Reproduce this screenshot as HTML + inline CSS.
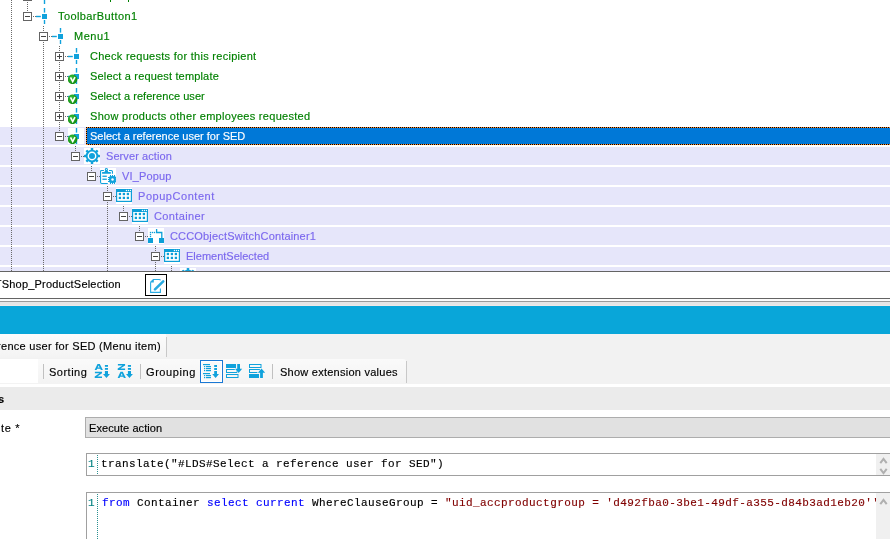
<!DOCTYPE html><html><head><meta charset="utf-8"><style>html,body{margin:0;padding:0;}body{width:890px;height:539px;position:relative;overflow:hidden;background:#fff;}#w{position:absolute;left:0;top:0;width:890px;height:539px;will-change:transform;}</style></head><body><div id="w"><div style="position:absolute;left:0;top:0;width:890px;height:271px;background:#fff;overflow:hidden"><div style="position:absolute;left:0px;top:127px;width:890px;height:18px;background:#e6e6fa;"></div><div style="position:absolute;left:0px;top:147px;width:890px;height:18px;background:#e6e6fa;"></div><div style="position:absolute;left:0px;top:167px;width:890px;height:18px;background:#e6e6fa;"></div><div style="position:absolute;left:0px;top:187px;width:890px;height:18px;background:#e6e6fa;"></div><div style="position:absolute;left:0px;top:207px;width:890px;height:18px;background:#e6e6fa;"></div><div style="position:absolute;left:0px;top:227px;width:890px;height:18px;background:#e6e6fa;"></div><div style="position:absolute;left:0px;top:247px;width:890px;height:18px;background:#e6e6fa;"></div><div style="position:absolute;left:0px;top:267px;width:890px;height:18px;background:#e6e6fa;"></div><div style="position:absolute;left:86px;top:127px;width:900px;height:18px;background:#0078d7;"></div><div style="position:absolute;left:86px;top:127px;width:900px;height:1px;background:repeating-linear-gradient(90deg,#000 0 1px,#ff8a2a 1px 2px)"></div><div style="position:absolute;left:86px;top:144px;width:900px;height:1px;background:repeating-linear-gradient(90deg,#000 0 1px,#ff8a2a 1px 2px)"></div><div style="position:absolute;left:86px;top:127px;width:1px;height:18px;background:repeating-linear-gradient(180deg,#000 0 1px,#ff8a2a 1px 2px)"></div><div style="position:absolute;left:11px;top:0px;width:1px;height:271px;background:repeating-linear-gradient(to bottom,#6a6a6a 0,#6a6a6a 1px,transparent 1px,transparent 2px)"></div><div style="position:absolute;left:27px;top:0px;width:1px;height:12px;background:repeating-linear-gradient(to bottom,#6a6a6a 0,#6a6a6a 1px,transparent 1px,transparent 2px)"></div><div style="position:absolute;left:43px;top:26px;width:1px;height:245px;background:repeating-linear-gradient(to bottom,#6a6a6a 0,#6a6a6a 1px,transparent 1px,transparent 2px)"></div><div style="position:absolute;left:59px;top:46px;width:1px;height:86px;background:repeating-linear-gradient(to bottom,#6a6a6a 0,#6a6a6a 1px,transparent 1px,transparent 2px)"></div><div style="position:absolute;left:75px;top:146px;width:1px;height:6px;background:repeating-linear-gradient(to bottom,#6a6a6a 0,#6a6a6a 1px,transparent 1px,transparent 2px)"></div><div style="position:absolute;left:91px;top:166px;width:1px;height:6px;background:repeating-linear-gradient(to bottom,#6a6a6a 0,#6a6a6a 1px,transparent 1px,transparent 2px)"></div><div style="position:absolute;left:107px;top:186px;width:1px;height:85px;background:repeating-linear-gradient(to bottom,#6a6a6a 0,#6a6a6a 1px,transparent 1px,transparent 2px)"></div><div style="position:absolute;left:123px;top:206px;width:1px;height:6px;background:repeating-linear-gradient(to bottom,#6a6a6a 0,#6a6a6a 1px,transparent 1px,transparent 2px)"></div><div style="position:absolute;left:139px;top:226px;width:1px;height:6px;background:repeating-linear-gradient(to bottom,#6a6a6a 0,#6a6a6a 1px,transparent 1px,transparent 2px)"></div><div style="position:absolute;left:155px;top:246px;width:1px;height:25px;background:repeating-linear-gradient(to bottom,#6a6a6a 0,#6a6a6a 1px,transparent 1px,transparent 2px)"></div><div style="position:absolute;left:171px;top:266px;width:1px;height:5px;background:repeating-linear-gradient(to bottom,#6a6a6a 0,#6a6a6a 1px,transparent 1px,transparent 2px)"></div><div style="position:absolute;left:23px;top:-8px;width:9px;height:9px;box-sizing:border-box;border:1px solid #646464;background:#fff"></div><svg style="position:absolute;left:36px;top:-12px;" width="16" height="16" viewBox="0 0 16 16"><g fill="#10a2dc"><rect x="6" y="6" width="5" height="5"/><rect x="7.8" y="0" width="1.4" height="4.6"/><rect x="7.8" y="12" width="1.4" height="4"/><rect x="0" y="7.8" width="4.8" height="1.4"/></g></svg><div style="position:absolute;left:110px;top:0px;width:1px;height:2px;background:#008000;"></div><div style="position:absolute;left:128px;top:0px;width:1px;height:2px;background:#008000;"></div><div style="position:absolute;left:23px;top:12px;width:9px;height:9px;box-sizing:border-box;border:1px solid #646464;background:#fff"></div><div style="position:absolute;left:25px;top:16px;width:5px;height:1px;background:#444;"></div><div style="position:absolute;left:33px;top:16px;width:1px;height:1px;background:#6a6a6a;"></div><div style="position:absolute;left:35px;top:16px;width:1px;height:1px;background:#6a6a6a;"></div><svg style="position:absolute;left:36px;top:8px;" width="16" height="16" viewBox="0 0 16 16"><g fill="#10a2dc"><rect x="6" y="6" width="5" height="5"/><rect x="7.8" y="0" width="1.4" height="4.6"/><rect x="7.8" y="12" width="1.4" height="4"/><rect x="0" y="7.8" width="4.8" height="1.4"/></g></svg><div style="position:absolute;left:58px;top:9px;white-space:pre;font-family:'Liberation Sans', sans-serif;font-size:11px;line-height:14px;color:#008000;letter-spacing:0.385px;font-weight:normal;-webkit-text-stroke:0.15px #008000;">ToolbarButton1</div><div style="position:absolute;left:39px;top:32px;width:9px;height:9px;box-sizing:border-box;border:1px solid #646464;background:#fff"></div><div style="position:absolute;left:41px;top:36px;width:5px;height:1px;background:#444;"></div><div style="position:absolute;left:49px;top:36px;width:1px;height:1px;background:#6a6a6a;"></div><div style="position:absolute;left:51px;top:36px;width:1px;height:1px;background:#6a6a6a;"></div><svg style="position:absolute;left:52px;top:28px;" width="16" height="16" viewBox="0 0 16 16"><g fill="#10a2dc"><rect x="6" y="6" width="5" height="5"/><rect x="7.8" y="0" width="1.4" height="4.6"/><rect x="7.8" y="12" width="1.4" height="4"/><rect x="0" y="7.8" width="4.8" height="1.4"/></g></svg><div style="position:absolute;left:74px;top:29px;white-space:pre;font-family:'Liberation Sans', sans-serif;font-size:11px;line-height:14px;color:#008000;letter-spacing:0.500px;font-weight:normal;-webkit-text-stroke:0.15px #008000;">Menu1</div><div style="position:absolute;left:55px;top:52px;width:9px;height:9px;box-sizing:border-box;border:1px solid #646464;background:#fff"></div><div style="position:absolute;left:57px;top:56px;width:5px;height:1px;background:#444;"></div><div style="position:absolute;left:59px;top:54px;width:1px;height:5px;background:#444;"></div><div style="position:absolute;left:65px;top:56px;width:1px;height:1px;background:#6a6a6a;"></div><div style="position:absolute;left:67px;top:56px;width:1px;height:1px;background:#6a6a6a;"></div><svg style="position:absolute;left:68px;top:48px;" width="16" height="16" viewBox="0 0 16 16"><g fill="#10a2dc"><rect x="6" y="6" width="5" height="5"/><rect x="7.8" y="0" width="1.4" height="4.6"/><rect x="7.8" y="12" width="1.4" height="4"/><rect x="0" y="7.8" width="4.8" height="1.4"/></g></svg><div style="position:absolute;left:90px;top:49px;white-space:pre;font-family:'Liberation Sans', sans-serif;font-size:11px;line-height:14px;color:#008000;letter-spacing:0.281px;font-weight:normal;-webkit-text-stroke:0.15px #008000;">Check requests for this recipient</div><div style="position:absolute;left:55px;top:72px;width:9px;height:9px;box-sizing:border-box;border:1px solid #646464;background:#fff"></div><div style="position:absolute;left:57px;top:76px;width:5px;height:1px;background:#444;"></div><div style="position:absolute;left:59px;top:74px;width:1px;height:5px;background:#444;"></div><div style="position:absolute;left:65px;top:76px;width:1px;height:1px;background:#6a6a6a;"></div><div style="position:absolute;left:67px;top:76px;width:1px;height:1px;background:#6a6a6a;"></div><svg style="position:absolute;left:68px;top:68px;" width="16" height="16" viewBox="0 0 16 16"><g fill="#10a2dc"><rect x="6" y="6" width="5" height="5"/><rect x="7.8" y="0" width="1.4" height="4.6"/><rect x="7.8" y="12" width="1.4" height="4"/><rect x="0" y="7.8" width="4.8" height="1.4"/></g><defs><radialGradient id="gc3" cx="0.4" cy="0.35" r="0.7"><stop offset="0" stop-color="#3cc23c"/><stop offset="1" stop-color="#0b870b"/></radialGradient></defs><circle cx="4.6" cy="11.3" r="4.8" fill="url(#gc3)"/><path d="M2.5 9.3 L4.7 13.6 L7.0 9.2" fill="none" stroke="#fff" stroke-width="1.6" stroke-linejoin="miter"/></svg><div style="position:absolute;left:90px;top:69px;white-space:pre;font-family:'Liberation Sans', sans-serif;font-size:11px;line-height:14px;color:#008000;letter-spacing:0.167px;font-weight:normal;-webkit-text-stroke:0.15px #008000;">Select a request template</div><div style="position:absolute;left:55px;top:92px;width:9px;height:9px;box-sizing:border-box;border:1px solid #646464;background:#fff"></div><div style="position:absolute;left:57px;top:96px;width:5px;height:1px;background:#444;"></div><div style="position:absolute;left:59px;top:94px;width:1px;height:5px;background:#444;"></div><div style="position:absolute;left:65px;top:96px;width:1px;height:1px;background:#6a6a6a;"></div><div style="position:absolute;left:67px;top:96px;width:1px;height:1px;background:#6a6a6a;"></div><svg style="position:absolute;left:68px;top:88px;" width="16" height="16" viewBox="0 0 16 16"><g fill="#10a2dc"><rect x="6" y="6" width="5" height="5"/><rect x="7.8" y="0" width="1.4" height="4.6"/><rect x="7.8" y="12" width="1.4" height="4"/><rect x="0" y="7.8" width="4.8" height="1.4"/></g><defs><radialGradient id="gc4" cx="0.4" cy="0.35" r="0.7"><stop offset="0" stop-color="#3cc23c"/><stop offset="1" stop-color="#0b870b"/></radialGradient></defs><circle cx="4.6" cy="11.3" r="4.8" fill="url(#gc4)"/><path d="M2.5 9.3 L4.7 13.6 L7.0 9.2" fill="none" stroke="#fff" stroke-width="1.6" stroke-linejoin="miter"/></svg><div style="position:absolute;left:90px;top:89px;white-space:pre;font-family:'Liberation Sans', sans-serif;font-size:11px;line-height:14px;color:#008000;letter-spacing:0.045px;font-weight:normal;-webkit-text-stroke:0.15px #008000;">Select a reference user</div><div style="position:absolute;left:55px;top:112px;width:9px;height:9px;box-sizing:border-box;border:1px solid #646464;background:#fff"></div><div style="position:absolute;left:57px;top:116px;width:5px;height:1px;background:#444;"></div><div style="position:absolute;left:59px;top:114px;width:1px;height:5px;background:#444;"></div><div style="position:absolute;left:65px;top:116px;width:1px;height:1px;background:#6a6a6a;"></div><div style="position:absolute;left:67px;top:116px;width:1px;height:1px;background:#6a6a6a;"></div><svg style="position:absolute;left:68px;top:108px;" width="16" height="16" viewBox="0 0 16 16"><g fill="#10a2dc"><rect x="6" y="6" width="5" height="5"/><rect x="7.8" y="0" width="1.4" height="4.6"/><rect x="7.8" y="12" width="1.4" height="4"/><rect x="0" y="7.8" width="4.8" height="1.4"/></g><defs><radialGradient id="gc5" cx="0.4" cy="0.35" r="0.7"><stop offset="0" stop-color="#3cc23c"/><stop offset="1" stop-color="#0b870b"/></radialGradient></defs><circle cx="4.6" cy="11.3" r="4.8" fill="url(#gc5)"/><path d="M2.5 9.3 L4.7 13.6 L7.0 9.2" fill="none" stroke="#fff" stroke-width="1.6" stroke-linejoin="miter"/></svg><div style="position:absolute;left:90px;top:109px;white-space:pre;font-family:'Liberation Sans', sans-serif;font-size:11px;line-height:14px;color:#008000;letter-spacing:0.289px;font-weight:normal;-webkit-text-stroke:0.15px #008000;">Show products other employees requested</div><div style="position:absolute;left:55px;top:132px;width:9px;height:9px;box-sizing:border-box;border:1px solid #646464;background:#fff"></div><div style="position:absolute;left:57px;top:136px;width:5px;height:1px;background:#444;"></div><div style="position:absolute;left:65px;top:136px;width:1px;height:1px;background:#6a6a6a;"></div><div style="position:absolute;left:67px;top:136px;width:1px;height:1px;background:#6a6a6a;"></div><div style="position:absolute;left:68px;top:128px;width:16px;height:16px;background:#fff;"></div><svg style="position:absolute;left:68px;top:128px;" width="16" height="16" viewBox="0 0 16 16"><g fill="#10a2dc"><rect x="6" y="6" width="5" height="5"/><rect x="7.8" y="0" width="1.4" height="4.6"/><rect x="7.8" y="12" width="1.4" height="4"/><rect x="0" y="7.8" width="4.8" height="1.4"/></g><defs><radialGradient id="gc6" cx="0.4" cy="0.35" r="0.7"><stop offset="0" stop-color="#3cc23c"/><stop offset="1" stop-color="#0b870b"/></radialGradient></defs><circle cx="4.6" cy="11.3" r="4.8" fill="url(#gc6)"/><path d="M2.5 9.3 L4.7 13.6 L7.0 9.2" fill="none" stroke="#fff" stroke-width="1.6" stroke-linejoin="miter"/></svg><div style="position:absolute;left:90px;top:129px;white-space:pre;font-family:'Liberation Sans', sans-serif;font-size:11px;line-height:14px;color:#fff;letter-spacing:0.000px;font-weight:normal;-webkit-text-stroke:0.15px #fff;">Select a reference user for SED</div><div style="position:absolute;left:71px;top:152px;width:9px;height:9px;box-sizing:border-box;border:1px solid #646464;background:#fff"></div><div style="position:absolute;left:73px;top:156px;width:5px;height:1px;background:#444;"></div><div style="position:absolute;left:81px;top:156px;width:1px;height:1px;background:#6a6a6a;"></div><div style="position:absolute;left:83px;top:156px;width:1px;height:1px;background:#6a6a6a;"></div><div style="position:absolute;left:84px;top:148px;width:16px;height:16px;background:#fff;"></div><svg style="position:absolute;left:84px;top:148px;" width="16" height="16" viewBox="0 0 16 16"><g fill="#10a2dc"><circle cx="8" cy="8" r="6.3"/><rect x="6.75" y="0" width="2.5" height="8" rx="0.6" transform="rotate(0.0 8 8)"/><rect x="6.75" y="0" width="2.5" height="8" rx="0.6" transform="rotate(45.0 8 8)"/><rect x="6.75" y="0" width="2.5" height="8" rx="0.6" transform="rotate(90.0 8 8)"/><rect x="6.75" y="0" width="2.5" height="8" rx="0.6" transform="rotate(135.0 8 8)"/><rect x="6.75" y="0" width="2.5" height="8" rx="0.6" transform="rotate(180.0 8 8)"/><rect x="6.75" y="0" width="2.5" height="8" rx="0.6" transform="rotate(225.0 8 8)"/><rect x="6.75" y="0" width="2.5" height="8" rx="0.6" transform="rotate(270.0 8 8)"/><rect x="6.75" y="0" width="2.5" height="8" rx="0.6" transform="rotate(315.0 8 8)"/></g><circle cx="8" cy="8" r="4.4" fill="#fff"/><circle cx="8" cy="8" r="3" fill="#10a2dc"/></svg><div style="position:absolute;left:106px;top:149px;white-space:pre;font-family:'Liberation Sans', sans-serif;font-size:11px;line-height:14px;color:#7b68ee;letter-spacing:0.083px;font-weight:normal;-webkit-text-stroke:0.15px #7b68ee;">Server action</div><div style="position:absolute;left:87px;top:172px;width:9px;height:9px;box-sizing:border-box;border:1px solid #646464;background:#fff"></div><div style="position:absolute;left:89px;top:176px;width:5px;height:1px;background:#444;"></div><div style="position:absolute;left:97px;top:176px;width:1px;height:1px;background:#6a6a6a;"></div><div style="position:absolute;left:99px;top:176px;width:1px;height:1px;background:#6a6a6a;"></div><div style="position:absolute;left:100px;top:168px;width:16px;height:16px;background:#fff;"></div><svg style="position:absolute;left:100px;top:168px;" width="16" height="16" viewBox="0 0 16 16"><g fill="none" stroke="#10a2dc" stroke-width="1.1"><path d="M3.9 2.45 H1.7 Q0.55 2.45 0.55 3.6 V14.3 Q0.55 15.45 1.7 15.45 H7.8"/><path d="M9 2.45 H11.3 Q12.45 2.45 12.45 3.6 V5.8"/></g><g fill="#10a2dc"><circle cx="6.4" cy="1.45" r="1.5"/><path d="M5.2 2.2 H7.6 L8.3 4 H10.8 V5.8 H2.1 V4 H4.5 Z"/><rect x="2.4" y="7.6" width="4.4" height="1.3"/><rect x="2.4" y="10.6" width="4.4" height="1.3"/><rect x="9.2" y="8.2" width="6.6" height="6.6" rx="1.2"/><circle cx="12.5" cy="11.5" r="3.2"/><rect x="9.975" y="7.0" width="1.05" height="2.5" transform="rotate(0 12.5 11.5)"/><rect x="11.975" y="7.0" width="1.05" height="2.5" transform="rotate(0 12.5 11.5)"/><rect x="13.975" y="7.0" width="1.05" height="2.5" transform="rotate(0 12.5 11.5)"/><rect x="9.975" y="7.0" width="1.05" height="2.5" transform="rotate(90 12.5 11.5)"/><rect x="11.975" y="7.0" width="1.05" height="2.5" transform="rotate(90 12.5 11.5)"/><rect x="13.975" y="7.0" width="1.05" height="2.5" transform="rotate(90 12.5 11.5)"/><rect x="9.975" y="7.0" width="1.05" height="2.5" transform="rotate(180 12.5 11.5)"/><rect x="11.975" y="7.0" width="1.05" height="2.5" transform="rotate(180 12.5 11.5)"/><rect x="13.975" y="7.0" width="1.05" height="2.5" transform="rotate(180 12.5 11.5)"/><rect x="9.975" y="7.0" width="1.05" height="2.5" transform="rotate(270 12.5 11.5)"/><rect x="11.975" y="7.0" width="1.05" height="2.5" transform="rotate(270 12.5 11.5)"/><rect x="13.975" y="7.0" width="1.05" height="2.5" transform="rotate(270 12.5 11.5)"/></g><circle cx="6.4" cy="1.35" r="0.55" fill="#fff"/><circle cx="12.5" cy="11.5" r="1.25" fill="#fff"/></svg><div style="position:absolute;left:122px;top:169px;white-space:pre;font-family:'Liberation Sans', sans-serif;font-size:11px;line-height:14px;color:#7b68ee;letter-spacing:0.143px;font-weight:normal;-webkit-text-stroke:0.15px #7b68ee;">VI_Popup</div><div style="position:absolute;left:103px;top:192px;width:9px;height:9px;box-sizing:border-box;border:1px solid #646464;background:#fff"></div><div style="position:absolute;left:105px;top:196px;width:5px;height:1px;background:#444;"></div><div style="position:absolute;left:113px;top:196px;width:1px;height:1px;background:#6a6a6a;"></div><div style="position:absolute;left:115px;top:196px;width:1px;height:1px;background:#6a6a6a;"></div><div style="position:absolute;left:116px;top:188px;width:16px;height:16px;background:#fff;"></div><svg style="position:absolute;left:116px;top:188px;" width="16" height="16" viewBox="0 0 16 16"><rect x="0.6" y="1.6" width="14.8" height="11.8" fill="#fff" stroke="#0c9fd8" stroke-width="1.2"/><rect x="0" y="1" width="16" height="3" fill="#0c9fd8"/><g fill="#fff"><circle cx="10.4" cy="2.5" r="0.65"/><circle cx="12.4" cy="2.5" r="0.65"/><circle cx="14.4" cy="2.5" r="0.65"/></g><g fill="#0c9fd8"><rect x="2.75" y="4.85" width="2.3" height="2.3"/><rect x="2.75" y="8.75" width="2.3" height="2.3"/><rect x="6.75" y="4.85" width="2.3" height="2.3"/><rect x="6.75" y="8.75" width="2.3" height="2.3"/><rect x="10.75" y="4.85" width="2.3" height="2.3"/><rect x="10.75" y="8.75" width="2.3" height="2.3"/></g></svg><div style="position:absolute;left:138px;top:189px;white-space:pre;font-family:'Liberation Sans', sans-serif;font-size:11px;line-height:14px;color:#7b68ee;letter-spacing:0.545px;font-weight:normal;-webkit-text-stroke:0.15px #7b68ee;">PopupContent</div><div style="position:absolute;left:119px;top:212px;width:9px;height:9px;box-sizing:border-box;border:1px solid #646464;background:#fff"></div><div style="position:absolute;left:121px;top:216px;width:5px;height:1px;background:#444;"></div><div style="position:absolute;left:129px;top:216px;width:1px;height:1px;background:#6a6a6a;"></div><div style="position:absolute;left:131px;top:216px;width:1px;height:1px;background:#6a6a6a;"></div><div style="position:absolute;left:132px;top:208px;width:16px;height:16px;background:#fff;"></div><svg style="position:absolute;left:132px;top:208px;" width="16" height="16" viewBox="0 0 16 16"><rect x="0.6" y="1.6" width="14.8" height="11.8" fill="#fff" stroke="#0c9fd8" stroke-width="1.2"/><rect x="0" y="1" width="16" height="3" fill="#0c9fd8"/><g fill="#fff"><circle cx="10.4" cy="2.5" r="0.65"/><circle cx="12.4" cy="2.5" r="0.65"/><circle cx="14.4" cy="2.5" r="0.65"/></g><g fill="#0c9fd8"><rect x="2.75" y="4.85" width="2.3" height="2.3"/><rect x="2.75" y="8.75" width="2.3" height="2.3"/><rect x="6.75" y="4.85" width="2.3" height="2.3"/><rect x="6.75" y="8.75" width="2.3" height="2.3"/><rect x="10.75" y="4.85" width="2.3" height="2.3"/><rect x="10.75" y="8.75" width="2.3" height="2.3"/></g></svg><div style="position:absolute;left:154px;top:209px;white-space:pre;font-family:'Liberation Sans', sans-serif;font-size:11px;line-height:14px;color:#7b68ee;letter-spacing:0.375px;font-weight:normal;-webkit-text-stroke:0.15px #7b68ee;">Container</div><div style="position:absolute;left:135px;top:232px;width:9px;height:9px;box-sizing:border-box;border:1px solid #646464;background:#fff"></div><div style="position:absolute;left:137px;top:236px;width:5px;height:1px;background:#444;"></div><div style="position:absolute;left:145px;top:236px;width:1px;height:1px;background:#6a6a6a;"></div><div style="position:absolute;left:147px;top:236px;width:1px;height:1px;background:#6a6a6a;"></div><div style="position:absolute;left:148px;top:228px;width:16px;height:16px;background:#fff;"></div><svg style="position:absolute;left:148px;top:228px;" width="16" height="16" viewBox="0 0 16 16"><g fill="#0c9fd8"><rect x="0" y="10" width="5" height="5"/><rect x="11" y="10" width="5" height="5"/><rect x="1.85" y="3.85" width="1.3" height="1.3"/><rect x="3.85" y="3.85" width="1.3" height="1.3"/><rect x="5.85" y="3.85" width="1.3" height="1.3"/><rect x="1.85" y="5.85" width="1.3" height="1.3"/><rect x="1.85" y="7.85" width="1.3" height="1.3"/></g><path d="M8.6 1 V4.5 H13.8 V10.2" fill="none" stroke="#0c9fd8" stroke-width="1.3"/></svg><div style="position:absolute;left:170px;top:229px;white-space:pre;font-family:'Liberation Sans', sans-serif;font-size:11px;line-height:14px;color:#7b68ee;letter-spacing:0.167px;font-weight:normal;-webkit-text-stroke:0.15px #7b68ee;">CCCObjectSwitchContainer1</div><div style="position:absolute;left:151px;top:252px;width:9px;height:9px;box-sizing:border-box;border:1px solid #646464;background:#fff"></div><div style="position:absolute;left:153px;top:256px;width:5px;height:1px;background:#444;"></div><div style="position:absolute;left:161px;top:256px;width:1px;height:1px;background:#6a6a6a;"></div><div style="position:absolute;left:163px;top:256px;width:1px;height:1px;background:#6a6a6a;"></div><div style="position:absolute;left:164px;top:248px;width:16px;height:16px;background:#fff;"></div><svg style="position:absolute;left:164px;top:248px;" width="16" height="16" viewBox="0 0 16 16"><rect x="0.6" y="1.6" width="14.8" height="11.8" fill="#fff" stroke="#0c9fd8" stroke-width="1.2"/><rect x="0" y="1" width="16" height="3" fill="#0c9fd8"/><g fill="#fff"><circle cx="10.4" cy="2.5" r="0.65"/><circle cx="12.4" cy="2.5" r="0.65"/><circle cx="14.4" cy="2.5" r="0.65"/></g><g fill="#0c9fd8"><rect x="2.75" y="4.85" width="2.3" height="2.3"/><rect x="2.75" y="8.75" width="2.3" height="2.3"/><rect x="6.75" y="4.85" width="2.3" height="2.3"/><rect x="6.75" y="8.75" width="2.3" height="2.3"/><rect x="10.75" y="4.85" width="2.3" height="2.3"/><rect x="10.75" y="8.75" width="2.3" height="2.3"/></g></svg><div style="position:absolute;left:186px;top:249px;white-space:pre;font-family:'Liberation Sans', sans-serif;font-size:11px;line-height:14px;color:#7b68ee;letter-spacing:0.000px;font-weight:normal;-webkit-text-stroke:0.15px #7b68ee;">ElementSelected</div><div style="position:absolute;left:180px;top:268px;width:16px;height:16px;background:#fff;"></div><svg style="position:absolute;left:180px;top:268px;" width="16" height="16" viewBox="0 0 16 16"><g fill="#10a2dc"><circle cx="8" cy="8" r="6.3"/><rect x="6.75" y="0" width="2.5" height="8" rx="0.6" transform="rotate(0.0 8 8)"/><rect x="6.75" y="0" width="2.5" height="8" rx="0.6" transform="rotate(45.0 8 8)"/><rect x="6.75" y="0" width="2.5" height="8" rx="0.6" transform="rotate(90.0 8 8)"/><rect x="6.75" y="0" width="2.5" height="8" rx="0.6" transform="rotate(135.0 8 8)"/><rect x="6.75" y="0" width="2.5" height="8" rx="0.6" transform="rotate(180.0 8 8)"/><rect x="6.75" y="0" width="2.5" height="8" rx="0.6" transform="rotate(225.0 8 8)"/><rect x="6.75" y="0" width="2.5" height="8" rx="0.6" transform="rotate(270.0 8 8)"/><rect x="6.75" y="0" width="2.5" height="8" rx="0.6" transform="rotate(315.0 8 8)"/></g><circle cx="8" cy="8" r="4.4" fill="#fff"/><circle cx="8" cy="8" r="3" fill="#10a2dc"/></svg></div><div style="position:absolute;left:0px;top:271px;width:890px;height:1px;background:#646464;"></div><div style="position:absolute;left:0px;top:272px;width:890px;height:26px;background:#fff;"></div><div style="position:absolute;left:-5.2px;top:277px;white-space:pre;font-family:'Liberation Sans', sans-serif;font-size:11px;line-height:14px;color:#000;letter-spacing:0.200px;font-weight:normal;-webkit-text-stroke:0.15px #000;">TShop_ProductSelection</div><div style="position:absolute;left:145px;top:274px;width:22px;height:22px;box-sizing:border-box;border:1px solid #000;background:#fff"></div><svg style="position:absolute;left:145px;top:274px;" width="22" height="22" viewBox="0 0 22 22"><path d="M5.6 8.2 V18.4 H15.4 V14.4" fill="none" stroke="#29abe2" stroke-width="1.1"/><path d="M5.6 8.2 L8.4 5.5 H14.2 Q15.2 5.5 15.6 6.3" fill="none" stroke="#29abe2" stroke-width="1.1"/><path d="M5.2 8.6 L8.8 5.1 V8.6 Z" fill="#29abe2"/><path d="M10 15.4 L18.2 7.4" stroke="#29abe2" stroke-width="2.6" stroke-linecap="round"/></svg><div style="position:absolute;left:0px;top:298px;width:890px;height:1px;background:#646464;"></div><div style="position:absolute;left:0px;top:299px;width:890px;height:2px;background:#fbfbfb;"></div><div style="position:absolute;left:0px;top:301px;width:890px;height:1px;background:#9a9a9a;"></div><div style="position:absolute;left:0px;top:302px;width:890px;height:3px;background:#e6e6e6;"></div><div style="position:absolute;left:0px;top:305px;width:890px;height:1px;background:#efe9e7;"></div><div style="position:absolute;left:0px;top:306px;width:890px;height:28px;background:#09a6d9;"></div><div style="position:absolute;left:0px;top:334px;width:890px;height:50px;background:#f2f2f2;"></div><div style="position:absolute;left:0;top:334px;width:166px;height:24px;background:linear-gradient(#fcfcfc,#f3f3f3)"></div><div style="position:absolute;left:166px;top:337px;width:1px;height:20px;background:#c8c8c8;"></div><div style="position:absolute;left:-2.9557142857142855px;top:339px;white-space:pre;font-family:'Liberation Sans', sans-serif;font-size:11px;line-height:14px;color:#000;letter-spacing:0.286px;font-weight:normal;-webkit-text-stroke:0.15px #000;">rence user for SED (Menu item)</div><div style="position:absolute;left:0;top:359px;width:406px;height:25px;background:linear-gradient(#fafafa,#f3f3f3);border-top-right-radius:3px"></div><div style="position:absolute;left:406px;top:361px;width:1px;height:22px;background:#c8c8c8;"></div><div style="position:absolute;left:0px;top:359px;width:38px;height:24px;background:#fff;"></div><div style="position:absolute;left:43px;top:364px;width:1px;height:15px;background:#c0c0c0;"></div><div style="position:absolute;left:49px;top:365px;white-space:pre;font-family:'Liberation Sans', sans-serif;font-size:11px;line-height:14px;color:#000;letter-spacing:0.500px;font-weight:normal;-webkit-text-stroke:0.15px #000;">Sorting</div><svg style="position:absolute;left:94px;top:363px;" width="16" height="16" viewBox="0 0 16 16"><g fill="#10a2dc"><path fill-rule="evenodd" d="M0.6 7.0 L3.5 0.9 H5.800000000000001 L8.9 7.0 H6.800000000000001 L6.300000000000001 5.800000000000001 H3.1 L2.6 7.0 Z M3.7 4.5 H5.6000000000000005 L4.75 2.4 Z"/><path d="M0.9 8.8 H8.0 V10.3 L3.3 13.5 H8.0 V15.0 H0.7 V13.5 L5.4 10.3 H0.9 Z"/><rect x="10.9" y="2" width="3.1" height="1.8"/><rect x="10.9" y="5" width="3.1" height="1.8"/><path d="M10.9 8 H14 V11 H15.9 L12.45 15 L9 11 H10.9 Z"/></g></svg><svg style="position:absolute;left:117px;top:363px;" width="16" height="16" viewBox="0 0 16 16"><g fill="#10a2dc"><path d="M0.9 0.9 H8.1 V2.4 L3.3 5.6000000000000005 H8.1 V7.1000000000000005 H0.7 V5.6000000000000005 L5.5 2.4 H0.9 Z"/><path fill-rule="evenodd" d="M0.6 14.9 L3.5 8.8 H5.800000000000001 L8.9 14.9 H6.800000000000001 L6.300000000000001 13.700000000000001 H3.1 L2.6 14.9 Z M3.7 12.4 H5.6000000000000005 L4.75 10.3 Z"/><rect x="10.9" y="2" width="3.1" height="1.8"/><rect x="10.9" y="5" width="3.1" height="1.8"/><path d="M10.9 8 H14 V11 H15.9 L12.45 15 L9 11 H10.9 Z"/></g></svg><div style="position:absolute;left:140px;top:364px;width:1px;height:15px;background:#c0c0c0;"></div><div style="position:absolute;left:146px;top:365px;white-space:pre;font-family:'Liberation Sans', sans-serif;font-size:11px;line-height:14px;color:#000;letter-spacing:0.571px;font-weight:normal;-webkit-text-stroke:0.15px #000;">Grouping</div><svg style="position:absolute;left:200px;top:360px;" width="23" height="23" viewBox="0 0 23 23"><rect x="0.5" y="0.5" width="22" height="22" fill="#f9f9f9" stroke="#1a78d4" stroke-width="1"/><rect x="1.5" y="1.5" width="20" height="20" fill="none" stroke="#ffffff" stroke-width="1"/><g fill="#10a2dc"><rect x="3" y="4" width="7" height="1.2"/><rect x="4" y="6" width="1.2" height="1.2"/><rect x="6" y="6" width="5" height="1.2"/><rect x="4" y="8" width="1.2" height="1.2"/><rect x="6" y="8" width="5" height="1.2"/><rect x="4" y="10" width="1.2" height="1.2"/><rect x="6" y="10" width="5" height="1.2"/><rect x="4" y="15" width="1.2" height="1.2"/><rect x="6" y="15" width="5" height="1.2"/><rect x="4" y="17" width="1.2" height="1.2"/><rect x="6" y="17" width="5" height="1.2"/><rect x="3" y="13" width="7" height="1.2"/><rect x="14.2" y="5" width="2.8" height="2"/><rect x="14.2" y="8" width="2.8" height="2"/><path d="M14.2 11 H17 V14 H19 L15.6 18 L12.2 14 H14.2 Z"/></g></svg><svg style="position:absolute;left:226px;top:364px;" width="17" height="15" viewBox="0 0 17 15"><g fill="#10a2dc"><rect x="0" y="0" width="10" height="4"/></g><g fill="none" stroke="#10a2dc" stroke-width="1"><rect x="0.5" y="5.5" width="10.5" height="3"/><rect x="0.5" y="10.5" width="11.5" height="3"/></g><path d="M11.2 0 H14 V4.8 H16.2 L12.6 9 L9 4.8 H11.2 Z" fill="#10a2dc" stroke="#f7f7f7" stroke-width="1.1" paint-order="stroke"/></svg><svg style="position:absolute;left:249px;top:364px;" width="17" height="15" viewBox="0 0 17 15"><g fill="none" stroke="#10a2dc" stroke-width="1"><rect x="0.5" y="0.5" width="11.5" height="3"/><rect x="0.5" y="5.5" width="10.5" height="3"/></g><g fill="#10a2dc"><rect x="0" y="10" width="10" height="4"/></g><path d="M11.1 14 H13.9 V8.7 H16.2 L12.5 4.6 L8.9 8.7 H11.1 Z" fill="#10a2dc" stroke="#f7f7f7" stroke-width="1.1" paint-order="stroke"/></svg><div style="position:absolute;left:272px;top:364px;width:1px;height:15px;background:#c0c0c0;"></div><div style="position:absolute;left:280px;top:365px;white-space:pre;font-family:'Liberation Sans', sans-serif;font-size:11px;line-height:14px;color:#000;letter-spacing:0.250px;font-weight:normal;-webkit-text-stroke:0.15px #000;">Show extension values</div><div style="position:absolute;left:0px;top:384px;width:890px;height:3px;background:#fff;"></div><div style="position:absolute;left:0px;top:387px;width:890px;height:23px;background:#ebebeb;"></div><div style="position:absolute;left:-2px;top:392px;white-space:pre;font-family:'Liberation Sans', sans-serif;font-size:11px;line-height:14px;color:#000;letter-spacing:0.000px;font-weight:bold;-webkit-text-stroke:0.15px #000;">s</div><div style="position:absolute;left:0px;top:410px;width:890px;height:129px;background:#fff;"></div><div style="position:absolute;left:1px;top:421px;white-space:pre;font-family:'Liberation Sans', sans-serif;font-size:11px;line-height:14px;color:#000;letter-spacing:0.667px;font-weight:normal;-webkit-text-stroke:0.15px #000;">te *</div><div style="position:absolute;left:85px;top:417px;width:810px;height:21px;box-sizing:border-box;border:1px solid #adadad;background:#e1e1e1"></div><div style="position:absolute;left:89px;top:421px;white-space:pre;font-family:'Liberation Sans', sans-serif;font-size:11px;line-height:14px;color:#000;letter-spacing:0.077px;font-weight:normal;-webkit-text-stroke:0.15px #000;">Execute action</div><div style="position:absolute;left:86px;top:453px;width:810px;height:23px;box-sizing:border-box;border:1px solid #a0a0a0;background:#fff"></div><div style="position:absolute;left:876px;top:454px;width:14px;height:21px;background:#f0f0f0;"></div><div style="position:absolute;left:97px;top:455px;width:1px;height:20px;background:repeating-linear-gradient(to bottom,#2a9090 0,#2a9090 1px,transparent 1px,transparent 2px)"></div><div style="position:absolute;left:88px;top:457px;white-space:pre;font-family:'Liberation Mono', monospace;font-size:11px;line-height:14px;color:#008080;letter-spacing:0.400px;font-weight:normal;-webkit-text-stroke:0.15px #008080;">1</div><div style="position:absolute;left:101px;top:457px;white-space:pre;font-family:'Liberation Mono', monospace;font-size:11px;line-height:14px;color:#000;letter-spacing:0.400px;font-weight:normal;-webkit-text-stroke:0.15px #000;">translate("#LDS#Select a reference user for SED")</div><svg style="position:absolute;left:879px;top:457px;" width="9" height="7" viewBox="0 0 9 7"><path d="M1.3 6.2 L4.5 2 L7.7 6.2" fill="none" stroke="#b0b0b0" stroke-width="2"/></svg><svg style="position:absolute;left:879px;top:468px;" width="9" height="7" viewBox="0 0 9 7"><path d="M1.3 0.8 L4.5 5 L7.7 0.8" fill="none" stroke="#b0b0b0" stroke-width="2"/></svg><div style="position:absolute;left:86px;top:492px;width:810px;height:60px;box-sizing:border-box;border:1px solid #a0a0a0;background:#fff"></div><div style="position:absolute;left:97px;top:494px;width:1px;height:45px;background:repeating-linear-gradient(to bottom,#2a9090 0,#2a9090 1px,transparent 1px,transparent 2px)"></div><div style="position:absolute;left:88px;top:496px;white-space:pre;font-family:'Liberation Mono', monospace;font-size:11px;line-height:14px;color:#008080;letter-spacing:0.400px;font-weight:normal;-webkit-text-stroke:0.15px #008080;">1</div><div style="position:absolute;left:102px;top:496px;width:774px;overflow:hidden;white-space:pre;font-family:'Liberation Mono', monospace;font-size:11px;line-height:14px;color:#000;letter-spacing:0.4px;-webkit-text-stroke:0.15px"><span style="color:#0000ff">from</span> Container <span style="color:#0000ff">select</span> <span style="color:#0000ff">current</span> WhereClauseGroup = <span style="color:#800000">"uid_accproductgroup = 'd492fba0-3be1-49df-a355-d84b3ad1eb20''</span></div><div style="position:absolute;left:876px;top:493px;width:14px;height:46px;background:#f0f0f0;"></div><svg style="position:absolute;left:879px;top:498px;" width="9" height="7" viewBox="0 0 9 7"><path d="M1.3 6.2 L4.5 2 L7.7 6.2" fill="none" stroke="#b0b0b0" stroke-width="2"/></svg></div></body></html>
